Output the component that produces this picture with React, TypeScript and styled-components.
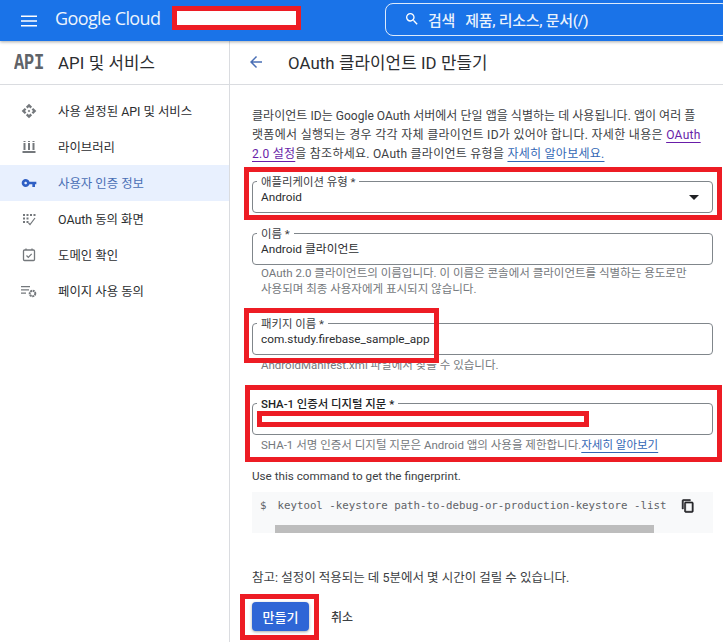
import React from "react";
import styled, { createGlobalStyle } from "styled-components";

const FONT = `Roboto, "Noto Sans CJK KR", sans-serif`;

const Global = createGlobalStyle`
  html, body { margin: 0; padding: 0; background: #fff; }
  body { font-family: ${FONT}; color: #202124; }
  * { box-sizing: border-box; }
`;

const Page = styled.div`
  position: relative;
  width: 723px;
  height: 642px;
  overflow: hidden;
  background: #fff;
`;

const TopBar = styled.header`
  position: relative;
  z-index: 1;
  height: 41px;
  background: #1a73e8;
  box-shadow: 0 1px 3px rgba(60, 64, 67, 0.45);
  display: flex;
  align-items: center;
  padding-left: 20px;
`;

const MenuGlyph = styled.svg`
  flex: none;
`;

const Logo = styled.span`
  flex: none;
  margin: -5px 0 0 17px;
  width: 112px;
  font-family: "Open Sans", sans-serif;
  font-size: 18px;
  letter-spacing: -0.6px;
  color: #fff;
  opacity: 0.92;
  white-space: nowrap;
`;

const SearchBox = styled.div`
  margin-left: 218px;
  width: 345px;
  height: 33px;
  margin-top: -3px;
  border: 1px solid rgba(255, 255, 255, 0.85);
  border-radius: 8px;
  display: flex;
  align-items: center;
  gap: 8px;
  padding-left: 18px;
  color: #fff;
  flex: none;
`;

const SearchText = styled.span`
  font-size: 15px;
  font-weight: 500;
  letter-spacing: -0.3px;
  white-space: pre;
  color: rgba(255, 255, 255, 0.92);
`;

const Body = styled.div`
  display: flex;
  height: 601px;
`;

const Sidebar = styled.aside`
  width: 230px;
  flex: none;
  border-right: 1px solid #dadce0;
`;

const SideHead = styled.div`
  height: 44px;
  border-bottom: 1px solid #dadce0;
  display: flex;
  align-items: center;
  padding: 0 0 2px 14px;
  gap: 14px;
`;

const ApiMark = styled.span`
  width: 30px;
  margin-top: 4px;
  font-family: "Liberation Mono", monospace;
  font-weight: 700;
  font-size: 17px;
  letter-spacing: -0.2px;
  color: #5f6368;
  transform: scaleY(1.25);
`;

const SideTitle = styled.span`
  font-size: 16.8px;
  letter-spacing: 0.1px;
  color: #2b2d30;
`;

const NavList = styled.nav`
  padding-top: 8px;
  display: flex;
  flex-direction: column;
`;

const NavItem = styled.div<{ $active?: boolean }>`
  height: 36px;
  display: flex;
  align-items: center;
  padding: 0 0 1px 21px;
  gap: 21px;
  font-size: 12.4px;
  background: ${(p) => (p.$active ? "#e8f0fe" : "transparent")};
  color: ${(p) => (p.$active ? "#4a6fb5" : "#2b2d30")};
  svg { color: ${(p) => (p.$active ? "#2f5fc4" : "#74787c")}; flex: none; }
`;

const Main = styled.main`
  flex: 1;
  min-width: 0;
`;

const MainHead = styled.div`
  height: 44px;
  border-bottom: 1px solid #dadce0;
  display: flex;
  align-items: center;
  padding: 0 0 2px 17px;
  gap: 23px;
`;

const PageTitle = styled.h1`
  margin: 0;
  font-size: 16.8px;
  font-weight: 400;
  letter-spacing: 0.1px;
  color: #2b2d30;
`;

const Content = styled.div`
  padding: 22px 10px 0 22px;
`;

const Intro = styled.div`
  margin: 0 0 17px;
  font-size: 12px;
  line-height: 19px;
  color: #3c4043;
  white-space: nowrap;
`;

const IntroLine = styled.p<{ $spacing: number }>`
  margin: 0;
  letter-spacing: ${(p) => p.$spacing}px;
`;

const TextLink = styled.a<{ $visited?: boolean }>`
  color: ${(p) => (p.$visited ? "#681da8" : "#3367b5")};
  text-decoration: underline;
  text-underline-offset: 3px;
`;

const Field = styled.div<{ $gap: number }>`
  position: relative;
  height: 32px;
  border: 1px solid #80868b;
  border-radius: 4px;
  padding-left: 8px;
  display: flex;
  align-items: center;
  justify-content: space-between;
  margin-bottom: ${(p) => p.$gap}px;
  font-size: 11.8px;
  line-height: 16px;
  color: #2b2d30;
`;

const FieldLabel = styled.label<{ $strong?: boolean }>`
  position: absolute;
  left: 4px;
  top: -7px;
  padding: 0 4px;
  background: #fff;
  font-size: 11.4px;
  line-height: 14px;
  color: ${(p) => (p.$strong ? "#202124" : "#3c4043")};
  font-weight: ${(p) => (p.$strong ? 500 : 400)};
`;

const Caret = styled.span`
  width: 0;
  height: 0;
  margin-right: 13px;
  border-left: 5px solid transparent;
  border-right: 5px solid transparent;
  border-top: 5px solid #202124;
`;

const Hint = styled.div<{ $gap: number }>`
  margin: 0 0 ${(p) => p.$gap}px;
  padding-left: 9px;
  font-size: 11.5px;
  line-height: 16px;
  color: #74787c;
  white-space: nowrap;
`;

const Plain = styled.p`
  margin: 0 0 8px;
  font-size: 11.7px;
  line-height: 16px;
  color: #3c4043;
`;

const CodeBlock = styled.div`
  position: relative;
  height: 41px;
  background: #f8f9fa;
  padding: 7px 0 0 8px;
  display: flex;
  align-items: flex-start;
  gap: 11px;
  font-family: "DejaVu Sans Mono", monospace;
  font-size: 10.77px;
  line-height: 14px;
  color: #5f6368;
  white-space: pre;
`;

const CopyGlyph = styled.svg`
  position: absolute;
  left: 429px;
  top: 7px;
  color: #202124;
`;

const ScrollThumb = styled.div`
  position: absolute;
  left: 23px;
  bottom: 0;
  width: 379px;
  height: 8px;
  background: #bdbdbd;
`;

const Note = styled.p`
  margin: 37px 0 16px;
  font-size: 12.5px;
  line-height: 16px;
  color: #3c4043;
`;

const Actions = styled.div`
  display: flex;
  align-items: center;
  gap: 22px;
`;

const Primary = styled.button`
  width: 57px;
  height: 29px;
  border: 0;
  border-radius: 4px;
  background: #2f66d6;
  box-shadow: 0 1px 3px rgba(60, 64, 67, 0.45);
  color: #fff;
  font: 500 13px ${FONT};
`;

const Ghost = styled.button`
  border: 0;
  padding: 0;
  background: transparent;
  color: #3c4043;
  font: 500 12px ${FONT};
`;

const RedFrame = styled.div<{ $x: number; $y: number; $w: number; $h: number; $fill?: boolean }>`
  position: absolute;
  z-index: 2;
  left: ${(p) => p.$x}px;
  top: ${(p) => p.$y}px;
  width: ${(p) => p.$w}px;
  height: ${(p) => p.$h}px;
  border: 5px solid #ed1c24;
  background: ${(p) => (p.$fill ? "#fff" : "transparent")};
  pointer-events: none;
`;

const Icon = ({ d, size = 16 }: { d: string; size?: number }) => (
  <svg width={size} height={size} viewBox="0 0 24 24" fill="currentColor"><path d={d} /></svg>
);

const ApiIcon = () => (
  <Icon d="M14 12l-2 2-2-2 2-2 2 2zm-2-6l2.120 2.120 2.500-2.500L12 1 7.380 5.620l2.500 2.500L12 6zm-6 6l2.120-2.120-2.500-2.500L1 12l4.620 4.620 2.500-2.500L6 12zm12 0l-2.120 2.120 2.500 2.500L23 12l-4.620-4.620-2.500 2.500L18 12zm-6 6l-2.120-2.120-2.500 2.500L12 23l4.620-4.620-2.500-2.500L12 18z" />
);
const LibraryIcon = () => (
  <svg width="16" height="16" viewBox="0 0 16 16" fill="currentColor">
    <path d="M2.500 2h2v1h-2zM7 2h2v1H7zM11.500 2h2v1h-2zM2.500 4h2v7h-2zM7 4h2v7H7zM11.500 4h2v7h-2zM1.500 12h13v2h-13z" />
  </svg>
);
const KeyIcon = () => (
  <Icon d="M12.650 10C11.830 7.670 9.610 6 7 6c-3.310 0-6 2.690-6 6s2.690 6 6 6c2.610 0 4.830-1.670 5.650-4H17v4h4v-4h2v-4H12.650zM7 14c-1.100 0-2-.9-2-2s.9-2 2-2 2 .9 2 2-.9 2-2 2z" />
);
const ConsentIcon = () => (
  <svg width="16" height="16" viewBox="0 0 16 16" fill="currentColor">
    <path d="M2 3h2v2H2zM5.500 3h2v2h-2zM9 3h2v2H9zM12.500 3h2v2h-2zM2 6.500h2v2H2zM5.500 6.500h2v2h-2zM2 10h2v2H2zM5.500 10h2v2h-2z" />
    <path d="M14 7l-5 6.500-1.500-1.500" fill="none" stroke="currentColor" strokeWidth="1.200" />
  </svg>
);
const DomainIcon = () => (
  <svg width="16" height="16" viewBox="0 0 16 16" fill="none" stroke="currentColor">
    <rect x="2.500" y="3" width="11" height="10.500" rx="1" strokeWidth="1.300" />
    <path d="M5 1.500V3M11 1.500V3" strokeWidth="1.300" />
    <path d="M5.500 8.500L7.300 10.300 10.700 6.800" strokeWidth="1.200" />
  </svg>
);
const PageUsageIcon = () => (
  <svg width="16" height="16" viewBox="0 0 16 16">
    <path d="M0 3h9v1.300H0zM0 6.200h8v1.300H0zM0 9.400h5v1.300H0z" fill="currentColor" />
    <circle cx="11.500" cy="10.500" r="2.800" fill="none" stroke="currentColor" strokeWidth="2" strokeDasharray="2 0.600" />
  </svg>
);

const NAV = [
  { label: "사용 설정된 API 및 서비스", icon: <ApiIcon /> },
  { label: "라이브러리", icon: <LibraryIcon /> },
  { label: "사용자 인증 정보", icon: <KeyIcon />, active: true },
  { label: "OAuth 동의 화면", icon: <ConsentIcon /> },
  { label: "도메인 확인", icon: <DomainIcon /> },
  { label: "페이지 사용 동의", icon: <PageUsageIcon /> },
];

export default function App() {
  return (
    <Page>
      <Global />
      <TopBar>
        <MenuGlyph width="18" height="18" viewBox="0 0 18 18" fill="#fff">
          <path d="M1 3.500h16V5H1zM1 8.200h16v1.500H1zM1 13h16v1.500H1z" />
        </MenuGlyph>
        <Logo>Google Cloud</Logo>
        <SearchBox>
          <svg width="16" height="16" viewBox="0 0 24 24" fill="#fff">
            <path d="M15.500 14h-.79l-.28-.27A6.470 6.470 0 0 0 16 9.500 6.500 6.500 0 1 0 9.500 16c1.610 0 3.090-.59 4.230-1.570l.27.28v.79l5 4.990L20.490 19l-4.990-5zm-6 0C7.010 14 5 11.990 5 9.500S7.010 5 9.500 5 14 7.010 14 9.500 11.990 14 9.500 14z" />
          </svg>
          <SearchText>검색   제품, 리소스, 문서(/)</SearchText>
        </SearchBox>
      </TopBar>
      <Body>
        <Sidebar>
          <SideHead>
            <ApiMark>API</ApiMark>
            <SideTitle>API 및 서비스</SideTitle>
          </SideHead>
          <NavList>
            {NAV.map((n) => (
              <NavItem key={n.label} $active={n.active}>
                {n.icon}
                <span>{n.label}</span>
              </NavItem>
            ))}
          </NavList>
        </Sidebar>
        <Main>
          <MainHead>
            <svg width="18" height="18" viewBox="0 0 24 24" fill="#4a6fb5">
              <path d="M20 11H7.830l5.590-5.590L12 4l-8 8 8 8 1.410-1.410L7.830 13H20v-2z" />
            </svg>
            <PageTitle>OAuth 클라이언트 ID 만들기</PageTitle>
          </MainHead>
          <Content>
            <Intro>
              <IntroLine $spacing={0.04}>클라이언트 ID는 Google OAuth 서버에서 단일 앱을 식별하는 데 사용됩니다. 앱이 여러 플</IntroLine>
              <IntroLine $spacing={0.3}>랫폼에서 실행되는 경우 각각 자체 클라이언트 ID가 있어야 합니다. 자세한 내용은 <TextLink $visited>OAuth</TextLink></IntroLine>
              <IntroLine $spacing={0.26}><TextLink $visited>2.0 설정</TextLink>을 참조하세요. OAuth 클라이언트 유형을 <TextLink>자세히 알아보세요.</TextLink></IntroLine>
            </Intro>
            <Field $gap={20}>
              <FieldLabel>애플리케이션 유형 *</FieldLabel>
              Android
              <Caret />
            </Field>
            <Field $gap={0}>
              <FieldLabel>이름 *</FieldLabel>
              Android 클라이언트
            </Field>
            <Hint $gap={26}>
              OAuth 2.0 클라이언트의 이름입니다. 이 이름은 콘솔에서 클라이언트를 식별하는 용도로만<br />
              사용되며 최종 사용자에게 표시되지 않습니다.
            </Hint>
            <Field $gap={2}>
              <FieldLabel>패키지 이름 *</FieldLabel>
              com.study.firebase_sample_app
            </Field>
            <Hint $gap={30}>AndroidManifest.xml 파일에서 찾을 수 있습니다.</Hint>
            <Field $gap={2}>
              <FieldLabel $strong>SHA-1 인증서 디지털 지문 *</FieldLabel>
            </Field>
            <Hint $gap={15}>
              SHA-1 서명 인증서 디지털 지문은 Android 앱의 사용을 제한합니다.<TextLink>자세히 알아보기</TextLink>
            </Hint>
            <Plain>Use this command to get the fingerprint.</Plain>
            <CodeBlock>
              <span>$</span>
              <span>keytool -keystore path-to-debug-or-production-keystore -list</span>
              <CopyGlyph width="14" height="14" viewBox="0 0 24 24" fill="currentColor" stroke="currentColor" strokeWidth="1">
                <path d="M16 1H4c-1.100 0-2 .9-2 2v14h2V3h12V1zm3 4H8c-1.100 0-2 .9-2 2v14c0 1.100.9 2 2 2h11c1.100 0 2-.9 2-2V7c0-1.100-.9-2-2-2zm0 16H8V7h11v14z" />
              </CopyGlyph>
              <ScrollThumb />
            </CodeBlock>
            <Note>참고: 설정이 적용되는 데 5분에서 몇 시간이 걸릴 수 있습니다.</Note>
            <Actions>
              <Primary>만들기</Primary>
              <Ghost>취소</Ghost>
            </Actions>
          </Content>
        </Main>
      </Body>
      <RedFrame $x={172} $y={6} $w={129} $h={24} $fill />
      <RedFrame $x={244} $y={167} $w={478} $h={53} />
      <RedFrame $x={244} $y={308} $w={195} $h={55} />
      <RedFrame $x={245} $y={385} $w={477} $h={77} />
      <RedFrame $x={257} $y={411} $w={332} $h={16} $fill />
      <RedFrame $x={240} $y={594} $w={79} $h={46} />
    </Page>
  );
}
